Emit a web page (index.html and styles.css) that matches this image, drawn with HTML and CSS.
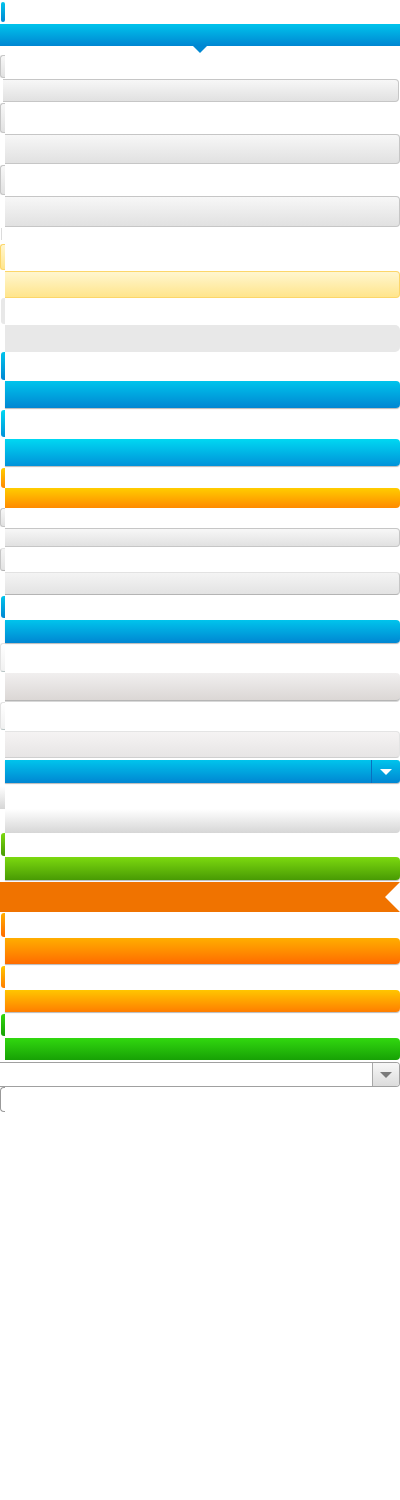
FILE: index.html
```html
<!DOCTYPE html>
<html lang="en">
<head>
<meta charset="utf-8">
<title>Bar sprites</title>
<link rel="stylesheet" href="styles.css">
</head>
<body>
<div class="sheet">
  <div class="cap pill blue r1"></div>
  <div class="banner blue r2"></div>
  <div class="cap gray r3"></div>
  <div class="bar gray wide r4"></div>
  <div class="cap gray r5"></div>
  <div class="bar gray r6"></div>
  <div class="cap gray r7"></div>
  <div class="bar gray r8"></div>
  <div class="tick r9"></div>
  <div class="cap yellow r10"></div>
  <div class="bar yellow r11"></div>
  <div class="cap flat r12"></div>
  <div class="bar flat r13"></div>
  <div class="cap blue r14"></div>
  <div class="bar blue shadow r15"></div>
  <div class="cap cyan r16"></div>
  <div class="bar cyan shadow r17"></div>
  <div class="cap orange r18"></div>
  <div class="bar orange r19"></div>
  <div class="cap gray r20"></div>
  <div class="bar gray r21"></div>
  <div class="cap gray soft r22"></div>
  <div class="bar gray soft r23"></div>
  <div class="cap blue r24"></div>
  <div class="bar blue shadow r25"></div>
  <div class="cap white r26"></div>
  <div class="bar warm r27"></div>
  <div class="cap white r28"></div>
  <div class="bar pale r29"></div>
  <div class="select blue r30"><span class="select-btn"><span class="tri"></span></span></div>
  <div class="cap light r31"></div>
  <div class="bar light r32"></div>
  <div class="cap green r33"></div>
  <div class="bar green shadow r34"></div>
  <div class="ribbon r35"></div>
  <div class="cap amber r36"></div>
  <div class="bar amber shadow r37"></div>
  <div class="cap gold r38"></div>
  <div class="bar gold shadow r39"></div>
  <div class="cap lime r40"></div>
  <div class="bar lime r41"></div>
  <div class="select plain r42"><span class="select-btn"><span class="tri"></span></span></div>
  <div class="cap input r43"></div>
</div>
</body>
</html>
```
FILE: styles.css
```css
html, body {
  margin: 0;
  padding: 0;
  background: #ffffff;
  font-family: "Liberation Sans", Arial, sans-serif;
}

.sheet {
  display: flex;
  flex-direction: column;
  width: 400px;
}

/* left caps of sliding-door sprites */
.cap {
  width: 4px;
  margin-left: 1px;
  border-radius: 3px 0 0 3px;
  box-sizing: border-box;
}
.cap.pill { border-radius: 3px; }

/* right pieces */
.bar {
  margin-left: 5px;
  width: 395px;
  border-radius: 0 4px 4px 0;
  box-sizing: border-box;
}
.bar.wide { margin-left: 3px; width: 396px; }
.bar.shadow { box-shadow: 0 1px 1px rgba(0, 0, 0, 0.28); }

/* colour skins */
.blue  { background: linear-gradient(#00c4ec, #0086d2); }
.cyan  { background: linear-gradient(#00d8f2, #0092d9); }
.orange { background: linear-gradient(#ffcd00, #ff8a00); }
.amber { background: linear-gradient(#ffae00, #ff6c00); }
.gold  { background: linear-gradient(#ffc600, #ff7e00); }
.green { background: linear-gradient(#7cd90f, #489a04); }
.lime  { background: linear-gradient(#31d80f, #17a105); }
.flat  { background: #e8e8e8; }
.flat.bar { border-radius: 0 5px 5px 0; }

.gray {
  background: linear-gradient(#f7f7f7, #e1e1e1);
  border: 1px solid #c6c6c6;
}
.bar.gray { border-left: 0; }
.cap.gray { width: 5px; margin-left: 0; border-right: 0; }
.gray.soft { border-top-color: #e2e2e2; border-bottom-color: #b4b4b4; background: linear-gradient(#f4f4f4, #e3e3e3); }

.yellow {
  background: linear-gradient(#fff6cf, #ffe58c);
  border: 1px solid #fcd66a;
}
.bar.yellow { border-left: 0; }
.cap.yellow { width: 5px; margin-left: 0; border-right: 0; }

.white {
  width: 5px;
  margin-left: 0;
  background: linear-gradient(#ffffff, #f1f1f1);
  border: 1px solid #e3e3e3;
  border-right: 0;
  border-bottom-color: #b8c4c4;
}
.warm {
  background: linear-gradient(#f1efef, #dbd7d5);
  border-bottom: 1px solid #b5b5b5;
  box-shadow: 0 1px 0 #d8d8d8;
}
.pale {
  background: linear-gradient(#f5f3f3, #e7e5e5);
  border: 1px solid #e4e4e4;
  border-left: 0;
  border-bottom-color: #cfcfcf;
}
.light { background: linear-gradient(#ffffff, #d6d6d6); }
.cap.light { width: 5px; margin-left: 0; border-radius: 0; }

.tick {
  width: 1px;
  margin-left: 1px;
  background: #dcdcdc;
}

.cap.input {
  width: 5px;
  margin-left: 0;
  border: 1px solid #9a9a9a;
  border-right: 0;
  border-radius: 4px 0 0 4px;
  background: #ffffff;
}

/* full-width banner with a pointer below */
.banner {
  position: relative;
  width: 400px;
}
.banner::after {
  content: "";
  position: absolute;
  left: 193px;
  top: 100%;
  border-left: 7px solid transparent;
  border-right: 7px solid transparent;
  border-top: 7px solid #0088d2;
}

/* ribbon with a notch at the right end */
.ribbon {
  width: 400px;
  background: #f07300;
  clip-path: polygon(0 0, 100% 0, 385px 50%, 100% 100%, 0 100%);
}

/* select boxes */
.select {
  display: flex;
  justify-content: flex-end;
  box-sizing: border-box;
}
.select.blue {
  margin-left: 5px;
  width: 395px;
  border-radius: 0 3px 3px 0;
  box-shadow: 0 1px 1px rgba(0, 0, 0, 0.28);
}
.select.blue .select-btn {
  width: 29px;
  border-left: 1px solid #0a6fbf;
}
.select.blue .tri { border-top-color: #ffffff; }

.select.plain {
  width: 400px;
  background: #ffffff;
  border: 1px solid #a0a0a0;
  border-left: 0;
  border-radius: 0 4px 4px 0;
}
.select.plain .select-btn {
  width: 27px;
  border-left: 1px solid #a8a8a8;
  background: linear-gradient(#f7f7f7, #dcdcdc);
  border-radius: 0 3px 3px 0;
}
.select.plain .tri { border-top-color: #7a7a7a; }

.select-btn {
  display: flex;
  align-items: center;
  justify-content: center;
  box-sizing: border-box;
}
.tri {
  width: 0;
  height: 0;
  border-left: 6px solid transparent;
  border-right: 6px solid transparent;
  border-top: 6px solid #fff;
}

/* row geometry (height / gap to previous row) */
.r1  { margin-top: 2px; height: 20px; }
.r2  { margin-top: 2px; height: 22px; }
.r3  { margin-top: 9px; height: 23px; }
.r4  { margin-top: 1px; height: 23px; }
.r5  { margin-top: 1px; height: 30px; }
.r6  { margin-top: 1px; height: 30px; }
.r7  { margin-top: 1px; height: 30px; }
.r8  { margin-top: 1px; height: 31px; }
.r9  { margin-top: 1px; height: 12px; }
.r10 { margin-top: 4px; height: 26px; }
.r11 { margin-top: 1px; height: 27px; }
.r12 { margin-top: 0;   height: 26px; }
.r13 { margin-top: 1px; height: 27px; }
.r14 { margin-top: 0;   height: 28px; }
.r15 { margin-top: 1px; height: 27px; }
.r16 { margin-top: 2px; height: 27px; }
.r17 { margin-top: 2px; height: 27px; }
.r18 { margin-top: 2px; height: 20px; }
.r19 { margin-top: 0;   height: 20px; }
.r20 { margin-top: 0;   height: 19px; }
.r21 { margin-top: 1px; height: 19px; }
.r22 { margin-top: 1px; height: 23px; }
.r23 { margin-top: 1px; height: 23px; }
.r24 { margin-top: 1px; height: 22px; }
.r25 { margin-top: 2px; height: 23px; }
.r26 { margin-top: 0;   height: 29px; }
.r27 { margin-top: 1px; height: 28px; }
.r28 { margin-top: 1px; height: 28px; }
.r29 { margin-top: 1px; height: 27px; }
.r30 { margin-top: 2px; height: 23px; }
.r31 { margin-top: 3px; height: 23px; }
.r32 { margin-top: 0;   height: 24px; }
.r33 { margin-top: 0;   height: 23px; }
.r34 { margin-top: 1px; height: 23px; }
.r35 { margin-top: 2px; height: 30px; }
.r36 { margin-top: 1px; height: 24px; }
.r37 { margin-top: 1px; height: 26px; }
.r38 { margin-top: 2px; height: 22px; }
.r39 { margin-top: 2px; height: 22px; }
.r40 { margin-top: 2px; height: 22px; }
.r41 { margin-top: 2px; height: 22px; }
.r42 { margin-top: 2px; height: 25px; }
.r43 { margin-top: 0;   height: 25px; }
```
